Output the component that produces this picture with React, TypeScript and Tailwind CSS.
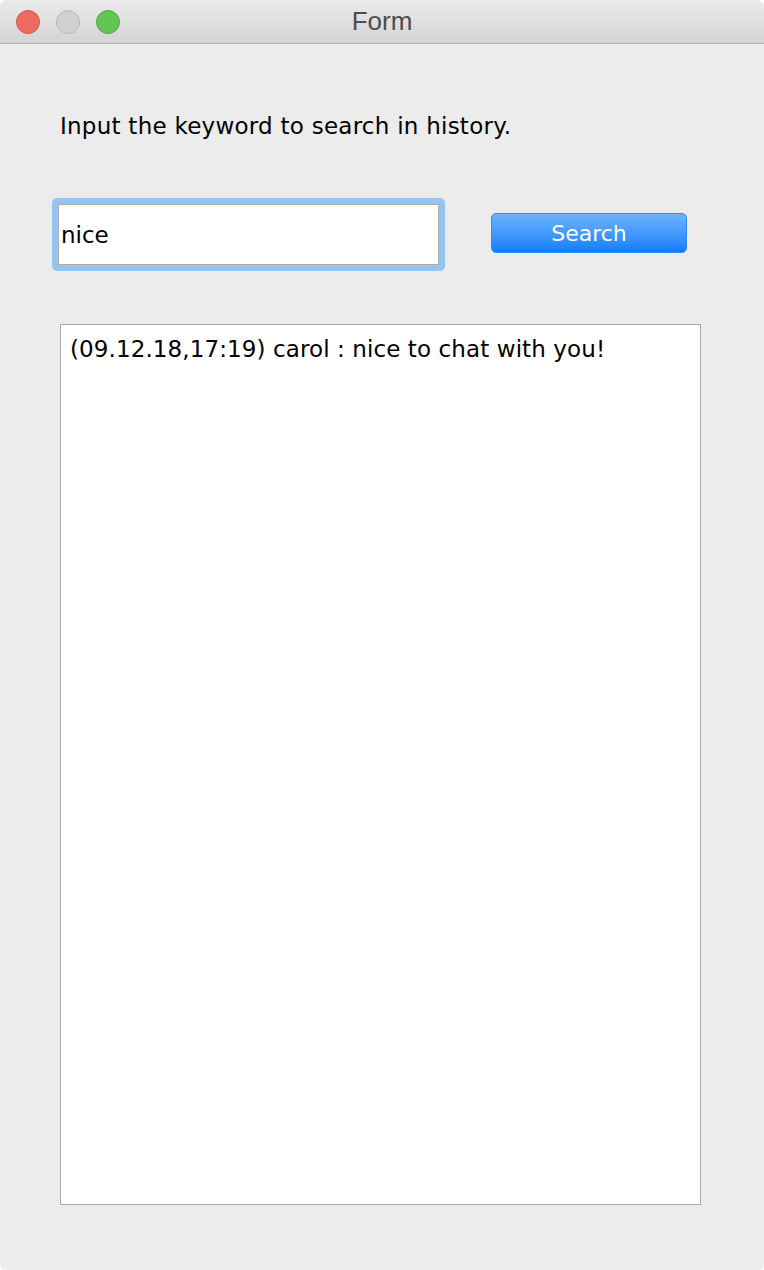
import React, { useState } from "react";

const font = { fontFamily: '"DejaVu Sans", "Liberation Sans", sans-serif' };

function TrafficLights() {
  return (
    <div className="absolute left-[16px] top-[10px] flex gap-[16px]">
      <span className="block w-[24px] h-[24px] rounded-full bg-[#ee6a5f] border border-[#d5544a]" />
      <span className="block w-[24px] h-[24px] rounded-full bg-[#d0d0d0] border border-[#b9b9b9]" />
      <span className="block w-[24px] h-[24px] rounded-full bg-[#62c554] border border-[#51a943]" />
    </div>
  );
}

export default function App() {
  const [keyword, setKeyword] = useState("nice");

  return (
    <div className="w-[764px] h-[1270px] bg-white" style={font}>
      <div className="w-full h-full flex flex-col bg-[#ececec] rounded-t-[7px] rounded-b-[6px] overflow-hidden">
        <div className="relative h-[44px] shrink-0 bg-gradient-to-b from-[#ebebeb] to-[#d4d4d4] border-b border-[#b1b1b1] flex items-center justify-center">
          <TrafficLights />
          <span className="text-[26px] text-[#4d4d4d] font-['Liberation_Sans',sans-serif]">
            Form
          </span>
        </div>

        <div className="flex flex-col px-[60px]">
          <p className="mt-[68px] text-[23px] leading-[28px] tracking-[0.25px] text-black">
            Input the keyword to search in history.
          </p>

          <div className="mt-[58px] flex items-start">
            <div className="-ml-[8px] p-[6px] rounded-[5px] bg-[#95c3f2]">
              <input
                value={keyword}
                onChange={(e) => setKeyword(e.target.value)}
                className="block w-[381px] h-[61px] bg-white border border-[#acacac] px-[2px] text-[23px] text-black outline-none"
                style={font}
              />
            </div>
            <button className="mt-[15px] ml-[46px] w-[196px] h-[40px] rounded-[5px] bg-gradient-to-b from-[#6cb3fa] to-[#0c7efe] border border-[#2b8cf5] text-white text-[22px]">
              Search
            </button>
          </div>

          <div className="mt-[53px] w-[641px] h-[881px] bg-white border border-[#a9a9a9] px-[9px] py-[8px]">
            <p className="text-[23px] leading-[32px] tracking-[0.1px] text-black">
              (09.12.18,17:19) carol : nice to chat with you!
            </p>
          </div>
        </div>
      </div>
    </div>
  );
}
